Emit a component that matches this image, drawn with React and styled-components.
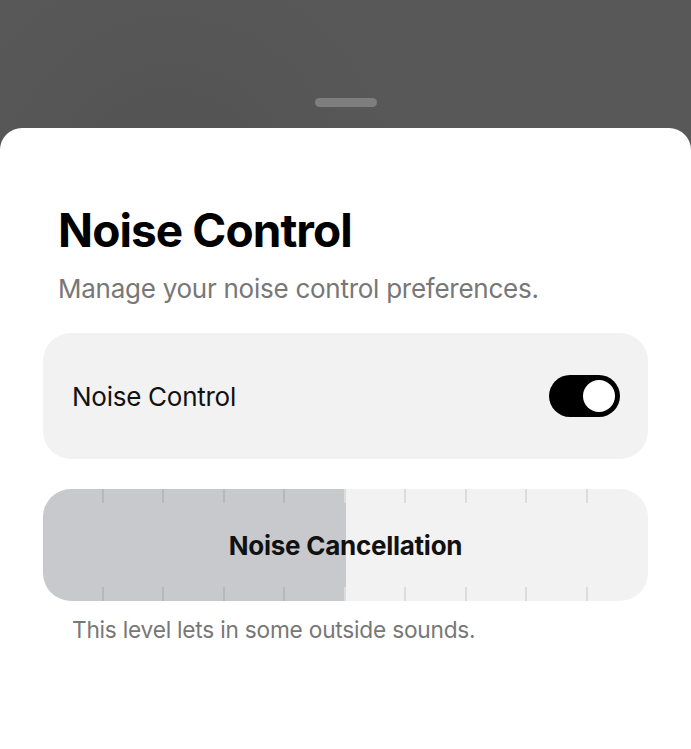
import React from 'react'
import styled, { createGlobalStyle } from 'styled-components'

const GlobalStyle = createGlobalStyle`
  html, body {
    margin: 0;
    padding: 0;
    background: #575757;
    font-family: Inter, "Noto Sans", sans-serif;
  }
`

const Page = styled.div`
  display: flex;
  flex-direction: column;
  height: 100vh;
  background: radial-gradient(circle at 25% 25%, #525252 0, #585858 30%, #585858 100%);
`

const Backdrop = styled.div`
  height: 128px;
  flex-shrink: 0;
  display: flex;
  justify-content: center;
  align-items: flex-end;
`

const Handle = styled.div`
  width: 62px;
  height: 9px;
  border-radius: 5px;
  background: #7e7e7e;
  margin-bottom: 21px;
`

const Sheet = styled.div`
  flex: 1;
  background: #ffffff;
  border-radius: 22px 22px 0 0;
  padding: 74px 43px 0;
  display: flex;
  flex-direction: column;
`

const Title = styled.h1`
  margin: 0 0 0 15px;
  font-size: 46px;
  line-height: 56px;
  font-weight: 700;
  letter-spacing: -0.02em;
  color: #000;
`

const Subtitle = styled.p`
  margin: 14px 0 0 15px;
  font-size: 26px;
  line-height: 34px;
  color: #777777;
  letter-spacing: -0.01em;
`

const Card = styled.div`
  margin-top: 27px;
  height: 126px;
  border-radius: 28px;
  background: #f2f2f2;
  display: flex;
  align-items: center;
  justify-content: space-between;
  padding: 0 28px 0 29px;
`

const Label = styled.span`
  font-size: 26px;
  color: #111;
  letter-spacing: -0.01em;
`

const Toggle = styled.div`
  width: 71px;
  height: 42px;
  border-radius: 21px;
  background: #000;
  display: flex;
  align-items: center;
  justify-content: ${(p) => (p.on ? 'flex-end' : 'flex-start')};
  padding: 0 5px;
  box-sizing: border-box;
`

const Knob = styled.div`
  width: 32px;
  height: 32px;
  border-radius: 50%;
  background: #fff;
`

const Slider = styled.div`
  position: relative;
  margin-top: 30px;
  height: 112px;
  border-radius: 28px;
  background: #f2f2f2;
  overflow: hidden;
  display: flex;
  align-items: center;
  justify-content: center;
`

const Fill = styled.div`
  position: absolute;
  left: 0;
  top: 0;
  bottom: 0;
  background: #c8c9cd;
`

const TickRow = styled.div`
  position: absolute;
  left: 0;
  right: 0;
  ${(p) => (p.bottom ? 'bottom: 0;' : 'top: 0;')}
  height: 14px;
  display: grid;
  grid-template-columns: repeat(10, 1fr);
`

const Tick = styled.div`
  border-right: 2px solid ${(p) => (p.filled ? '#b7b8bc' : '#dcdcdc')};
  &:last-child {
    border-right: none;
  }
`

const SliderLabel = styled.span`
  position: relative;
  font-size: 26px;
  font-weight: 700;
  color: #111;
  letter-spacing: -0.01em;
`

const Helper = styled.p`
  margin: 14px 0 0 29px;
  font-size: 22.7px;
  line-height: 30px;
  color: #777;
  letter-spacing: -0.01em;
`

const LEVEL = 5
const STEPS = 10

function Ticks({ bottom }) {
  return (
    <TickRow bottom={bottom}>
      {Array.from({ length: STEPS }).map((_, i) => (
        <Tick key={i} filled={i < LEVEL - 1} />
      ))}
    </TickRow>
  )
}

export default function App() {
  return (
    <>
      <GlobalStyle />
      <Page>
        <Backdrop>
          <Handle />
        </Backdrop>
        <Sheet>
          <Title>Noise Control</Title>
          <Subtitle>Manage your noise control preferences.</Subtitle>
          <Card>
            <Label>Noise Control</Label>
            <Toggle on>
              <Knob />
            </Toggle>
          </Card>
          <Slider>
            <Fill style={{ width: `${(LEVEL / STEPS) * 100}%` }} />
            <Ticks />
            <Ticks bottom />
            <SliderLabel>Noise Cancellation</SliderLabel>
          </Slider>
          <Helper>This level lets in some outside sounds.</Helper>
        </Sheet>
      </Page>
    </>
  )
}
